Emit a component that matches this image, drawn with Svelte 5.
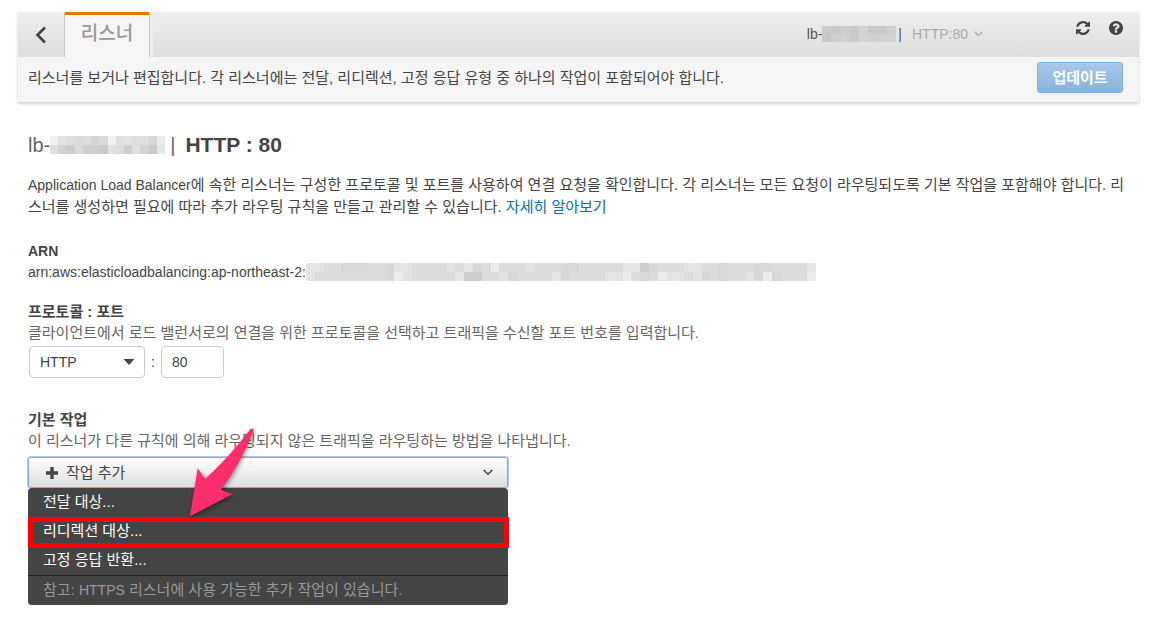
<script>
  const title = [
    ['#efefee', '#dfdfdf', '#dcdcdc', '#d8d8da', '#dbdbdb', '#d0d1d3', '#d6d6d6', '#f0f0f0', '#dedbd8', '#dfe0df', '#d8dbdb', '#dadada', '#d3d3d5', '#e9eaec'],
    ['#dcdcdc', '#cfcfcf', '#c8c8ca', '#d8d8d8', '#cdcccc', '#cacaca', '#c4c4c6', '#e0dfe0', '#d9d9d9', '#c9c9c9', '#dedede', '#cfcfcf', '#c5c5c7', '#e3e4e7']
  ];
  const head = [
    ['#c9c9c9', '#c5c5c5', '#cbcbcd', '#c4c6c9', '#d2d2d2', '#c7c6c6', '#c6c6c8', '#cdcdcd'],
    ['#c6c4c4', '#cccccc', '#cfcfcf', '#c8c8ca', '#d4d4d4', '#cecece', '#d0d0d0', '#d0d2d2']
  ];
  const tones = ['#ebebec', '#e1e1e1', '#d9d9d9', '#d3d3d3', '#c9c7c8'];
  const arnTones = [
    '1122333223112222121320222122233222221143222112232223322221',
    '1222222223012222214422132222132222110232011213232213032220'
  ];
  const arn = arnTones.map((row) => [...row].map((n) => tones[n]));
  const actions = ['전달 대상...', '리디렉션 대상...', '고정 응답 반환...'];
  let port = $state('80');
</script>

{#snippet mosaic(rows, kind)}
  <svg class="mosaic {kind}" viewBox="0 0 {rows[0].length} 2" preserveAspectRatio="none" shape-rendering="crispEdges" aria-hidden="true">
    {#each rows as row, y}
      {#each row as fill, x}
        <rect {x} {y} width="1" height="1" {fill} />
      {/each}
    {/each}
  </svg>
{/snippet}

<div class="page">
  <header>
    <div class="bar">
      <button class="back" aria-label="뒤로">
        <svg width="12" height="18" viewBox="0 0 12 18"><path d="M10 1.5 2.5 9l7.500 7.500" fill="none" stroke="#444" stroke-width="2.600" /></svg>
      </button>
      <a class="tab" href="#listener">리스너</a>
      <button class="picker">
        <span class="dark">lb-</span>{@render mosaic(head, 'small')}<span class="dark sep">|</span>
        <span>HTTP:80</span>
        <svg class="caret" width="9" height="6" viewBox="0 0 9 6"><path d="M.7.8 4.500 4.600 8.300.8" fill="none" stroke="#aaa" stroke-width="1.300" /></svg>
      </button>
      <div class="tools">
        <button aria-label="새로 고침">
          <svg width="14" height="14" viewBox="0 0 1536 1536"><path fill="#444" d="M1511 928q0 5-1 7-64 268-268 434.500T764 1536q-146 0-282.500-55T238 1324l-129 129q-19 19-45 19t-45-19-19-45V960q0-26 19-45t45-19h448q26 0 45 19t19 45-19 45l-137 137q71 66 161 102t187 36q134 0 250-65t186-179q11-17 53-117 8-23 30-23h192q13 0 22.500 9.500t9.500 22.500zm25-800v448q0 26-19 45t-45 19h-448q-26 0-45-19t-19-45 19-45l138-138Q969 256 768 256q-134 0-250 65T332 500q-11 17-53 117-8 23-30 23H50q-13 0-22.500-9.500T18 608v-7q65-268 270-434.500T768 0q146 0 284 55.500T1297 212l130-129q19-19 45-19t45 19 19 45z" /></svg>
        </button>
        <button aria-label="도움말">
          <svg width="14" height="14" viewBox="0 0 1536 1536"><path fill="#444" d="M896 1248v-192q0-14-9-23t-23-9H672q-14 0-23 9t-9 23v192q0 14 9 23t23 9h192q14 0 23-9t9-23zm256-672q0-88-55.500-163T958 297t-170-41q-243 0-371 213-15 24 8 42l132 100q7 6 19 6 16 0 25-12 53-68 86-92 34-24 86-24 48 0 85.500 26t37.500 59q0 38-20 61t-68 45q-63 28-115.500 86.500T640 892v36q0 14 9 23t23 9h192q14 0 23-9t9-23q0-19 21.500-49.500T972 829q32-18 49-28.500t46-35 44.500-48 28-60.500 12.500-81zm384 192q0 209-103 385.500T1153.500 1433 768 1536t-385.500-103T103 1153.500 0 768t103-385.500T382.500 103 768 0t385.500 103T1433 382.500 1536 768z" /></svg>
        </button>
      </div>
    </div>
    <div class="info">
      <p>리스너를 보거나 편집합니다. 각 리스너에는 전달, 리디렉션, 고정 응답 유형 중 하나의 작업이 포함되어야 합니다.</p>
      <button class="update">업데이트</button>
    </div>
  </header>

  <main>
    <h1><span class="name">lb-</span>{@render mosaic(title, 'medium')}<span class="bar-sep">|</span>HTTP : 80</h1>
    <p class="intro"><span class="latin">Application Load Balancer</span>에 속한 리스너는 구성한 프로토콜 및 포트를 사용하여 연결 요청을 확인합니다. 각 리스너는 모든 요청이 라우팅되도록 기본 작업을 포함해야 합니다. 리스너를 생성하면 필요에 따라 추가 라우팅 규칙을 만들고 관리할 수 있습니다. <a href="#more">자세히 알아보기</a></p>

    <section>
      <h2 class="latin">ARN</h2>
      <div class="arn latin">arn:aws:elasticloadbalancing:ap-northeast-2:{@render mosaic(arn, 'large')}</div>
    </section>

    <section class="protocol">
      <h2>프로토콜 : 포트</h2>
      <p class="help">클라이언트에서 로드 밸런서로의 연결을 위한 프로토콜을 선택하고 트래픽을 수신할 포트 번호를 입력합니다.</p>
      <div class="fields">
        <div class="select">
          <select aria-label="프로토콜"><option>HTTP</option><option>HTTPS</option></select>
          <svg width="12" height="6" viewBox="0 0 12 6"><path d="M.5 0h11L6 6z" fill="#444" /></svg>
        </div>
        <span class="colon">:</span>
        <input aria-label="포트" type="text" bind:value={port} />
      </div>
    </section>

    <section class="action">
      <h2>기본 작업</h2>
      <p class="help">이 리스너가 다른 규칙에 의해 라우팅되지 않은 트래픽을 라우팅하는 방법을 나타냅니다.</p>
      <div class="dropdown">
        <button class="add" aria-expanded="true">
          <svg width="14" height="14" viewBox="0 0 14 14"><path d="M5.300 1h3.400v4.300H13v3.400H8.700V13H5.300V8.700H1V5.300h4.300z" fill="#444" /></svg>
          <span>작업 추가</span>
          <svg class="caret" width="10" height="7" viewBox="0 0 10 7"><path d="M.7 1 5 5.200 9.300 1" fill="none" stroke="#444" stroke-width="1.600" /></svg>
        </button>
        <ul>
          {#each actions as action, i}
            <li class:marked={i === 1}><button>{action}</button></li>
          {/each}
          <li class="note">참고: <span class="latin">HTTPS</span> 리스너에 사용 가능한 추가 작업이 있습니다.</li>
        </ul>
        <svg class="pointer" width="72" height="96" viewBox="0 0 72 96" aria-hidden="true"><path d="M66.500 4Q70 2.500 69.500 6 56 40 37 64.700L48.500 69.300 6 91.300 13.700 43.300 21 53.700Q40 38 66.500 4z" fill="#ff2d6b" /></svg>
      </div>
    </section>
  </main>
</div>

<style>
  :global(body) { margin: 0; background: #fff; }
  .page { padding: 12px 12px 22px 18px; color: #444; font: 15px/22px "Liberation Sans", "Noto Sans CJK KR", sans-serif; }
  button, input, select { font: inherit; color: inherit; margin: 0; padding: 0; border: 0; background: none; box-sizing: border-box; }
  button { cursor: pointer; }
  svg { display: block; flex: none; }
  p, h1, h2, ul { margin: 0; padding: 0; }
  a { color: #0073bb; text-decoration: none; }
  .latin { font-size: 14px; }

  header { background: #f5f5f5; box-shadow: 0 2px 3px rgba(0, 0, 0, .18); }
  .bar { display: flex; height: 45px; background: linear-gradient(#eee, #dedede); }
  .back { width: 46px; padding-left: 17px; }
  .tab { box-sizing: border-box; width: 86px; padding-top: 9px; border: solid #c6c6c6; border-width: 0 1px; background: linear-gradient(#e07700 3px, #f5f5f5 3px); box-shadow: 3px 0 #ededed; color: #999; font-size: 19px; font-weight: 500; line-height: 26px; text-align: center; }
  .picker { display: flex; align-items: center; margin-left: auto; padding-bottom: 2px; color: #aaa; font-size: 14px; }
  .dark { color: #555; }
  .sep { margin: 0 10px 0 2px; }
  .picker .caret { margin-left: 6px; }
  .tools { display: flex; align-items: flex-start; gap: 19px; padding: 9px 16px 0 93px; }
  .info { display: flex; align-items: center; justify-content: space-between; box-sizing: border-box; min-height: 45px; padding: 0 16px 4px 10px; }
  .update { width: 86px; height: 31px; border: 1px solid #85b0dc; border-radius: 3px; background: linear-gradient(#a9c8e8, #87b2de); color: #fff; font-weight: 700; }

  .mosaic { opacity: .9; }
  .small { width: 74px; height: 16px; }
  .medium { width: 115px; height: 18px; }
  .large { width: 510px; height: 18px; }

  main { padding: 32px 8px 0 10px; }
  h1 { display: flex; align-items: center; font-size: 21px; line-height: 22px; }
  .name, .bar-sep { font-size: 20px; font-weight: 400; color: #666; }
  .bar-sep { margin: 0 10px 0 5px; }
  .intro { margin-top: 18px; word-break: break-all; }
  section { margin-top: 22px; }
  h2 { font-size: 15px; line-height: 22px; font-weight: 700; }
  h2.latin { font-size: 14px; }
  .arn { display: flex; align-items: center; line-height: 20px; }
  .help { color: #666; line-height: 20px; }
  .protocol { margin-top: 19px; }
  .fields { display: flex; align-items: center; margin-top: 3px; padding-left: 1px; font-size: 14px; }
  .select { display: grid; align-items: center; width: 116px; }
  .select select, .select svg { grid-area: 1 / 1; }
  .select svg { justify-self: end; margin-right: 10px; pointer-events: none; }
  select, input { height: 32px; padding: 0 10px; border: 1px solid #ccc; border-radius: 4px; background: #fff; appearance: none; }
  .colon { width: 16px; text-align: center; }
  input { width: 63px; }

  .action { margin-top: 31px; }
  .dropdown { position: relative; width: 480px; max-width: 100%; margin-top: 6px; }
  .add { display: flex; align-items: center; gap: 7px; width: 100%; height: 31px; padding: 0 14px 0 16px; border: 1px solid #7fa9ee; border-radius: 3px; box-shadow: 0 0 0 1px #a9c7f7; background: linear-gradient(#fff, #dedede); }
  .add .caret { margin-left: auto; }
  ul { list-style: none; border-radius: 4px; background: #444; color: #fff; }
  li { min-height: 29px; box-sizing: border-box; }
  li button { display: block; width: 100%; height: 29px; padding: 0 15px 2px; text-align: left; }
  .marked { position: relative; }
  .marked::after { content: ""; position: absolute; inset: 0 -1px -2px 0; border: 5px solid #f00; pointer-events: none; }
  .note { padding: 3px 15px 4px; border-top: 1px solid #222; color: #999; }
  .pointer { position: absolute; left: 156px; top: -32px; filter: drop-shadow(1px 2px 2px rgba(0, 0, 0, .4)); pointer-events: none; }
</style>
